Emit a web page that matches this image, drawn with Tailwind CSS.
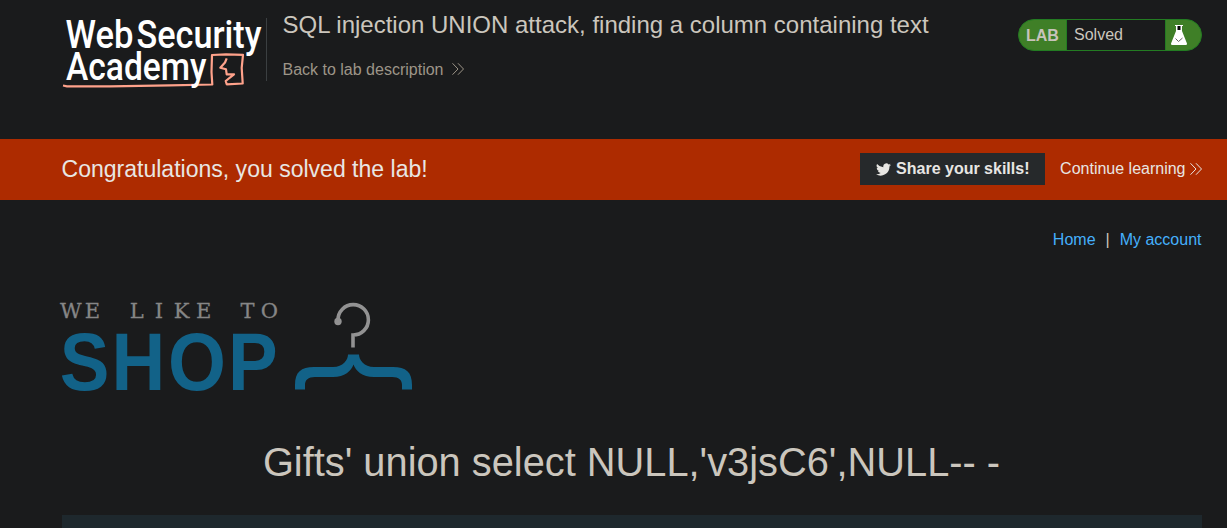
<!DOCTYPE html>
<html lang="en">
<head>
<meta charset="utf-8">
<title>SQL injection UNION attack, finding a column containing text</title>
<script src="https://cdn.jsdelivr.net/npm/@tailwindcss/browser@4"></script>
</head>
<body class="flex h-[528px] flex-col overflow-hidden bg-[#1a1b1c] font-['Liberation_Sans',Arial,sans-serif] text-base text-[#cbc6bd]">
<header class="flex h-[139px] shrink-0 items-start pr-[25px] pl-[60px]">
  <svg class="mt-[10px] h-20 w-[206px] shrink-0 overflow-visible" viewBox="60 10 206 80" fill="none">
    <g fill="#fff" font-family="Roboto, sans-serif" font-weight="500" font-size="38.5">
      <text x="65.5" y="47.700" textLength="68" lengthAdjust="spacingAndGlyphs">Web</text>
      <text x="136.500" y="47.700" textLength="125" lengthAdjust="spacingAndGlyphs">Security</text>
    </g>
    <path d="M63 85.500 67 86.300 110 86.300 170 85.300 212.300 84.500 211.500 72 212 55 226 54.300 243 54.800 241.700 68 242.700 83.500 226.700 84.300 225.700 81 234 74.300 226.700 74.300 226 69.300 220.300 67.700 225 62.500 226.700 58.300" stroke="#ffa28b" stroke-width="2.200" stroke-linejoin="round"/>
    <text x="66" y="80" textLength="140.500" lengthAdjust="spacingAndGlyphs" fill="#fff" font-family="Roboto, sans-serif" font-weight="500" font-size="38">Academy</text>
  </svg>
  <div class="mt-[18px] h-[63px] w-px bg-[#3b3f41]"></div>
  <div class="ml-[15.500px] grow pt-[10px]">
    <h2 class="text-2xl leading-[30px]">SQL injection UNION attack, finding a column containing text</h2>
    <a class="mt-5 flex items-center leading-5 text-[#9d9588]">Back to lab description
      <svg class="mb-[2px] ml-[9px] h-3 w-3" viewBox="0 0 12 12" fill="none" stroke="currentColor" stroke-width="1"><path d="M.5.300 6 6 .500 11.700M6 .300 11.500 6 6 11.700"/></svg>
    </a>
  </div>
  <div class="mt-[19px] flex h-8 w-[184px] overflow-hidden rounded-full border border-[#237c22] bg-[#3f7f27]">
    <div class="w-[47px] pl-[7px] font-bold leading-[31px] text-[#c8c3ba]">LAB</div>
    <div class="w-[100px] border-x border-[#237c22] bg-[#1a1b1c] pl-[7px] leading-[29px]">Solved</div>
    <svg class="mt-[5px] ml-[4px] h-5 w-[18px]" viewBox="0 0 18 20"><path d="M5 0h8v1h-1v5l5 12.500q0 1.500-1 1.500H2q-1 0-1-1.500L6 6V1H5z" fill="#fff"/><path d="M7.500 1h3v4h-3z" fill="#050505"/><path d="m5.500 13.500 3 3L12.500 13" fill="none" stroke="#666"/></svg>
  </div>
</header>
<section class="flex h-[61px] shrink-0 items-center bg-[#ad2b00] pr-[25px] pl-[61.500px] text-[#e8e6e3]">
  <h4 class="grow text-[23.040px]">Congratulations, you solved the lab!</h4>
  <button class="mb-px flex h-8 w-[185px] items-center whitespace-nowrap bg-[#26292b] pl-4 font-bold">
    <svg class="mr-[5px] h-[15px] w-[15px] shrink-0" viewBox="0 1 24 22" fill="currentColor"><path d="M24 4.600a10 10 0 0 1-2.800.800 5 5 0 0 0 2.100-2.700 10 10 0 0 1-3.100 1.200 4.900 4.900 0 0 0-8.400 4.500A14 14 0 0 1 1.700 3.200a4.900 4.900 0 0 0 1.500 6.500 5 5 0 0 1-2.200-.600v.100a4.900 4.900 0 0 0 4 4.800 5 5 0 0 1-2.200.100 4.900 4.900 0 0 0 4.600 3.400A10 10 0 0 1 0 19.500 14 14 0 0 0 21.500 7q1.500-1 2.500-2.400z"/></svg>
    Share your skills!
  </button>
  <a class="mb-px ml-[15px] flex items-center">Continue learning
    <svg class="ml-[4.500px] h-3 w-3" viewBox="0 0 12 12" fill="none" stroke="currentColor" stroke-width="1"><path d="M.5.300 6 6 .500 11.700M6 .300 11.500 6 6 11.700"/></svg>
  </a>
</section>
<main class="min-h-0 grow overflow-hidden pr-[25px] pl-[62px]">
  <nav class="flex justify-end gap-[10px] pt-[30px] pr-[.5px] leading-5 text-[#45b0fb]"><a>Home</a><span class="text-[#cbc6bd]">|</span><a>My account</a></nav>
  <svg class="mt-[50px] h-[95px] w-[354px] overflow-visible" viewBox="62 300 354 95" fill="none">
    <g transform="scale(1.08 1)" text-anchor="middle"><text y="318.500" x="65.600 85.700 106.300 126.500 147.200 168.200 188.500 208.300 229.200 249.500" font-family="DejaVu Serif, serif" font-size="19.500" fill="#868686" stroke="#868686" stroke-width=".25">WE LIKE TO</text></g>
    <g transform="scale(.92 1)" text-anchor="middle"><text y="390" x="92 150.500 214.200 274.800" font-family="Liberation Sans, sans-serif" font-weight="700" font-size="81" fill="#126288">SHOP</text></g>
    <circle cx="338" cy="321.500" r="3.700" fill="#929292"/>
    <path d="M338 321.500V320A15.200 15.200 0 1 1 353 335V347.500" stroke="#929292" stroke-width="3.600"/>
    <path d="M348 354.500H359C359 360 364 367 374 367H393C406 367 412 372 412 385V389.500H402V385C402 380 399 377 392 377H374C362 377 356 371 353.500 364.500C351 371 345 377 333 377H315C308 377 305 380 305 385V389.500H295V385C295 372 301 367 314 367H333C343 367 348 360 348 354.500Z" fill="#126288"/>
  </svg>
  <h1 class="mt-[42px] mr-px text-center text-[39.800px] leading-[50px]">Gifts' union select NULL,'v3jsC6',NULL-- -</h1>
  <div class="mt-[28px] h-[13px] bg-[#1e282d]"></div>
</main>
</body>
</html>
